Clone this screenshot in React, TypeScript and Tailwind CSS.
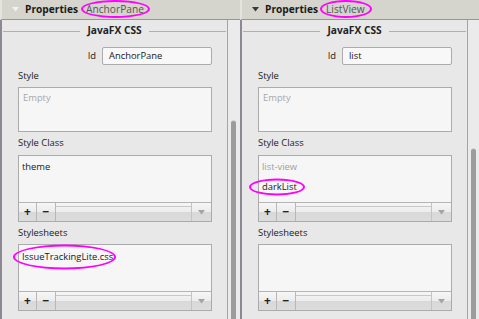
import type { ReactNode } from 'react';

const font = { fontFamily: '"Open Sans", "Liberation Sans", sans-serif' };

function Ring({ children, className }: { children: ReactNode; className: string }) {
  return (
    <span className="relative inline-block">
      {children}
      <span className={`pointer-events-none absolute top-1/2 -translate-y-1/2 rounded-[50%] border-2 border-[#f0f] ${className}`} />
    </span>
  );
}

function Toolbar() {
  return (
    <div className="flex h-[19px] border-t border-[#b4b4b4] bg-[linear-gradient(#f6f6f6_0%,#ececec_50%,#d9d9d9_51%,#dcdcdc_100%)] text-[#222]">
      <div className="flex w-[18px] items-center justify-center border-r border-[#b8b8b8] text-[12px] font-bold leading-none">+</div>
      <div className="flex w-[19px] items-center justify-center border-r border-[#b8b8b8] text-[12px] font-bold leading-none">−</div>
      <div className="flex flex-1 flex-col pt-[3px]">
        <div className="h-px bg-[#c8c8c8]" />
      </div>
      <div className="flex w-[20px] items-center justify-center border-l border-[#c4c4c4]">
        <svg width="7" height="5" viewBox="0 0 7 5">
          <path d="M0 0H7L3.5 4.5Z" fill="#a4a4a4" />
        </svg>
      </div>
    </div>
  );
}

function Label({ children }: { children: ReactNode }) {
  return <div className="mt-[4px] h-[14px] text-[9.4px] leading-[14px] text-[#202020]">{children}</div>;
}

function Panel({
  kind,
  id,
  classItems,
  sheet,
  thumbTop,
  dark,
}: {
  kind: ReactNode;
  id: string;
  classItems: ReactNode;
  sheet: ReactNode;
  thumbTop: string;
  dark: boolean;
}) {
  return (
    <section className="flex h-full flex-col">
      <header className="flex h-[20px] items-center border-b border-l-2 border-b-[#98978f] border-l-[#e4e3de] bg-[#d5d4cd] pl-[10px]">
        <svg width="7" height="5" viewBox="0 0 7 5" className="mr-[6px]">
          <path d="M0 0H7L3.5 4.5Z" fill={dark ? '#3a3a3a' : '#f2f2f2'} />
        </svg>
        <span className="text-[10.2px] font-bold text-[#1a1a1a]">Properties</span>
        <span className="ml-[8px] text-[10.2px] text-[#555]">{kind}</span>
      </header>
      <div className="flex flex-1 border-l-2 border-[#8e8892] bg-[#e8e8e8]">
        <div className="flex w-[226px] flex-col border-r border-[#a4a4a4] pl-[16px] pr-[15px]">
          <div className="-ml-[15px] -mr-[14px] flex h-[22px] items-center gap-[7px]">
            <div className="h-px flex-1 bg-[#b0b0b0]" />
            <span className="text-[10.2px] font-bold text-[#222]">JavaFX CSS</span>
            <div className="h-px flex-1 bg-[#b0b0b0]" />
          </div>
          <div className="mt-[5px] flex h-[18px] items-center justify-end gap-[6px]">
            <span className="text-[9.4px] text-[#202020]">Id</span>
            <div className="flex h-[18px] w-[110px] items-center rounded-[2px] border border-[#ababab] bg-[#f8f8f8] pl-[6px] text-[9.4px] text-[#202020]">
              {id}
            </div>
          </div>
          <Label>Style</Label>
          <div className="mt-[4px] h-[45px] border border-[#ababab] bg-[#f6f6f6] px-[4px] pt-[3px] text-[9.4px] leading-[14px] text-[#a8a8a8]">
            Empty
          </div>
          <Label>Style Class</Label>
          <div className="mt-[5px] flex h-[67px] flex-col border border-[#ababab] bg-[#f6f6f6]">
            <div className="flex-1 px-[3px] pt-[1px] text-[9.4px] leading-[20px] text-[#202020]">{classItems}</div>
            <Toolbar />
          </div>
          <Label>Stylesheets</Label>
          <div className="mt-[4px] flex h-[67px] flex-col border border-[#ababab] bg-[#f6f6f6]">
            <div className="flex-1 px-[3px] pt-[2px] text-[9.4px] leading-[20px] text-[#202020]">{sheet}</div>
            <Toolbar />
          </div>
        </div>
        <div className="flex flex-1 flex-col bg-[#ebebeb] px-[3px]">
          <div className={thumbTop} />
          <div className="w-[5px] flex-1 rounded-t-[3px] border-t border-[#d8d8d8] bg-[#9c9c9c]" />
        </div>
      </div>
    </section>
  );
}

export default function App() {
  return (
    <div className="flex h-[319px] w-[479px] overflow-hidden bg-[#e8e8e8]" style={font}>
      <div className="w-[240px]">
        <Panel
          kind={<Ring className="-left-[5px] -right-[6px] h-[18px]">AnchorPane</Ring>}
          id="AnchorPane"
          classItems={<div>theme</div>}
          sheet={<Ring className="-left-[9px] -right-[3px] h-[25px]">IssueTrackingLite.css</Ring>}
          thumbTop="h-[100px]"
          dark={false}
        />
      </div>
      <div className="flex-1">
        <Panel
          kind={<Ring className="-left-[6px] -right-[7px] h-[18px]">ListView</Ring>}
          id="list"
          classItems={
            <>
              <div className="text-[#a0a0a0]">list-view</div>
              <div>
                <Ring className="-left-[13px] -right-[8px] h-[17px]">darkList</Ring>
              </div>
            </>
          }
          sheet={null}
          thumbTop="h-[128px]"
          dark
        />
      </div>
    </div>
  );
}
